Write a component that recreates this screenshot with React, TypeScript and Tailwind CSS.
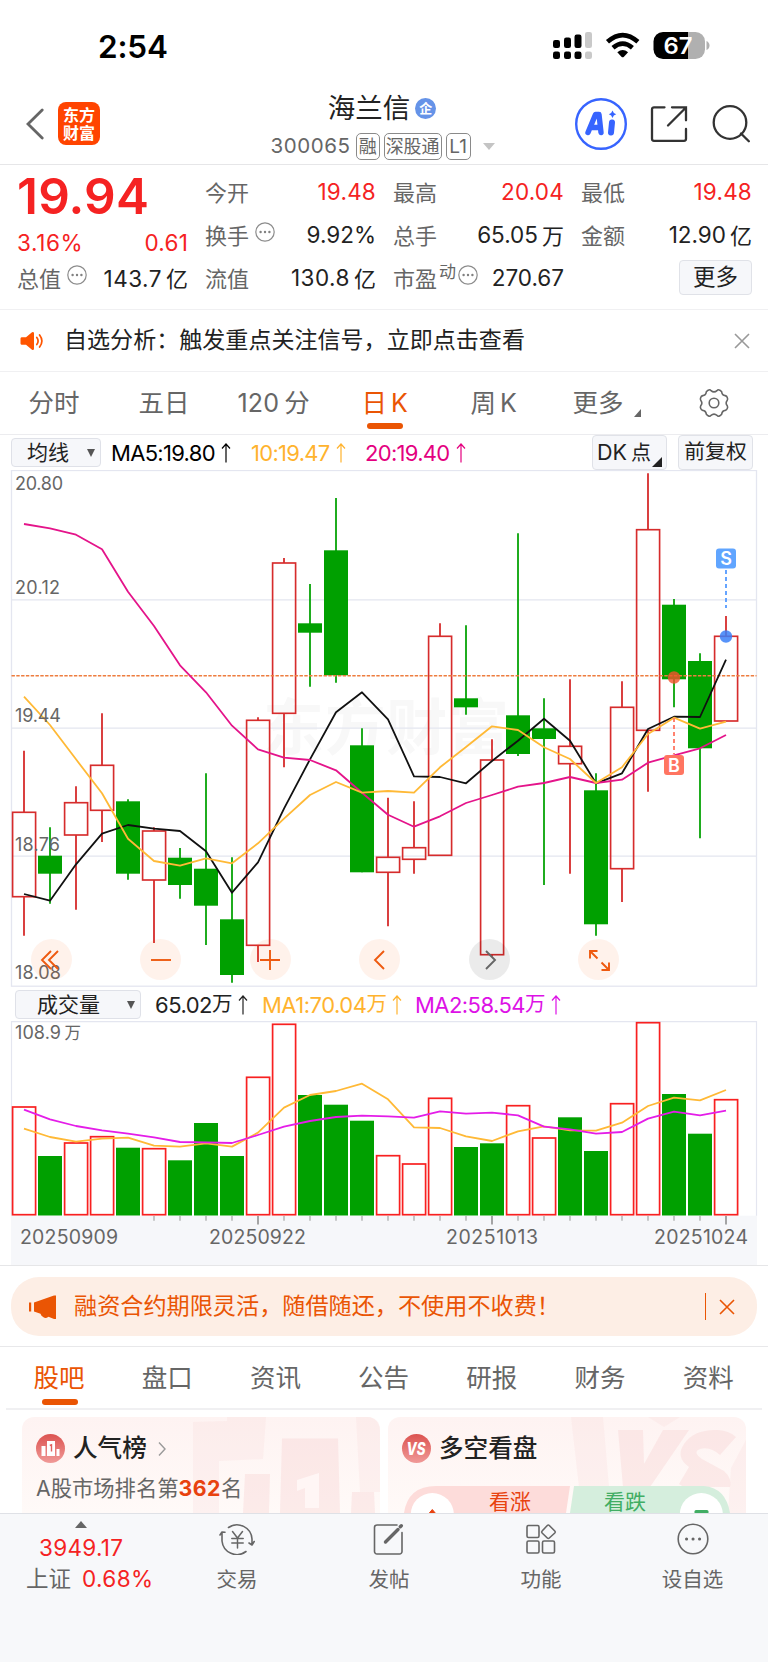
import React from "react";

const RED = "#d62c2c";
const GREEN = "#00a000";

type Candle = { up: boolean; high: number; top: number; bottom: number; low: number };

const c = (up: number, high: number, top: number, bottom: number, low: number): Candle => ({
  up: up === 1,
  high,
  top,
  bottom,
  low,
});

const candles: Candle[] = [
  c(1, 750.7, 812.3, 896.7, 935.7),
  c(0, 827.3, 855.7, 873.7, 903.7),
  c(1, 786.3, 802.7, 835, 909.7),
  c(1, 713.3, 765.3, 810.3, 842),
  c(0, 799.3, 801.3, 873.7, 879.7),
  c(1, 827.3, 831, 880, 943),
  c(0, 848, 857.7, 885, 898.7),
  c(0, 773.3, 868.7, 905.7, 945),
  c(0, 857.3, 919.3, 975, 982.7),
  c(1, 717.3, 720.3, 945.3, 962),
  c(1, 558, 563, 713.3, 767.3),
  c(0, 584, 623.3, 632.7, 686.7),
  c(0, 498, 550.3, 675.3, 682.7),
  c(0, 728.3, 745.3, 872.3, 872.3),
  c(1, 797.7, 857.3, 872.3, 926.3),
  c(1, 801.3, 847.7, 859.3, 873.7),
  c(1, 623.3, 636.3, 855.3, 855.3),
  c(0, 625.3, 698.3, 707.3, 714.7),
  c(1, 739.3, 760, 954.7, 956.5),
  c(0, 533.3, 715.3, 754, 756),
  c(0, 698.3, 728.3, 739, 885),
  c(1, 679.3, 746.3, 763.7, 873.7),
  c(0, 773.3, 790.3, 924.3, 935.7),
  c(1, 681.3, 707.3, 868.7, 902),
  c(1, 473.3, 529.7, 730.3, 791.7),
  c(0, 599, 604.7, 679.3, 707.3),
  c(0, 653.3, 661, 748.3, 838.3),
  c(1, 616, 636.3, 721, 721),
];

const ma5 = [894, 900.7, 864.3, 833.7, 825, 828.7, 831, 851.3, 892.7, 862.3, 808.7, 759.3, 712.3, 692.3, 719.3, 776.3, 777, 783.3, 761, 740.7, 718.7, 740.7, 783.3, 773.3, 729, 716.7, 717, 659.7];
const ma10 = [696.7, 725, 759.3, 793.3, 838.7, 861, 865.7, 858.3, 863.3, 843.3, 818.7, 795, 782, 792.7, 791, 792.7, 767.3, 747, 726.3, 730, 747.3, 759, 783, 767.3, 734, 717.7, 728.7, 721.7];
const ma20 = [524, 528.3, 534.7, 549.3, 591.7, 626, 665.3, 692.3, 725.7, 749.3, 757.7, 760, 770.3, 792.7, 814.7, 826.7, 816.3, 803, 795, 786.7, 783, 777, 783, 779.7, 762.7, 755.3, 748.3, 735];

const volumes = [1107, 1156, 1143, 1136.7, 1147.7, 1148.7, 1160.3, 1123, 1156, 1077.3, 1024.3, 1095, 1104.7, 1120.7, 1155.7, 1164, 1098.3, 1147, 1143.3, 1105.7, 1138, 1117.3, 1151, 1103.7, 1022.7, 1094, 1133.7, 1099.7];
const volumeUp = [1, 0, 1, 1, 0, 1, 0, 0, 0, 1, 1, 0, 0, 0, 1, 1, 1, 0, 0, 1, 1, 0, 0, 1, 1, 0, 0, 1];
const vma1 = [446, 471, 485, 476, 473, 497, 500, 490, 500, 458, 383, 345, 333, 311, 358, 442, 444, 469, 483, 454, 439, 451, 452, 428, 378, 353, 361, 330].map((v) => 980 + v / 3);
const vma2 = [389, 418, 438, 451, 461, 472, 486, 487, 489, 465, 440, 423, 411, 407, 409, 413, 394, 401, 398, 406, 440, 448, 461, 456, 416, 395, 406, 392].map((v) => 980 + v / 3);

const cx = (i: number) => 24 + 26 * i;
const points = (ys: number[]) => ys.map((y, i) => `${cx(i)},${y}`).join(" ");

function UpArrow({ className = "" }: { className?: string }) {
  return (
    <svg viewBox="0 0 10 20" className={`h-5 w-2.5 shrink-0 ${className}`} fill="none" stroke="currentColor" strokeWidth="1.2">
      <path d="M5 19.5V1M1 5.5L5 1l4 4.5" />
    </svg>
  );
}

function Dots() {
  return (
    <svg viewBox="0 0 20 20" className="h-5 w-5 shrink-0" fill="none" stroke="#8c8c8c" strokeWidth="1.2">
      <circle cx="10" cy="10" r="9.2" />
      <g fill="#808080" stroke="none">
        <circle cx="5.6" cy="10" r="1.2" />
        <circle cx="10" cy="10" r="1.2" />
        <circle cx="14.4" cy="10" r="1.2" />
      </g>
    </svg>
  );
}

function Cross({ className = "" }: { className?: string }) {
  return (
    <svg viewBox="0 0 16 16" className={`h-4 w-4 ${className}`} fill="none" stroke="currentColor" strokeWidth="1.6">
      <path d="M1 1l14 14M15 1L1 15" />
    </svg>
  );
}

function StatusBar() {
  return (
    <div className="flex h-[86px] items-start justify-between pr-[56px] pl-[98px]">
      <div className="mt-[31px] text-[31.5px] leading-none font-semibold tracking-[-0.2px] text-black">2:54</div>
      <svg viewBox="552 30 160 32" className="mt-[30px] h-8 w-40">
        <g fill="#000">
          <rect x="553" y="40" width="7" height="8" rx="2.2" />
          <rect x="564" y="37.5" width="7" height="10.5" rx="2.2" />
          <rect x="574.5" y="34.5" width="7" height="13.5" rx="2.2" />
          <rect x="553" y="51.5" width="7" height="7.5" rx="2.2" />
          <rect x="564" y="51.5" width="7" height="7.5" rx="2.2" />
          <rect x="574.5" y="51.5" width="7" height="7.5" rx="2.2" />
        </g>
        <g fill="#c9c9c9">
          <rect x="585" y="32" width="7" height="16" rx="2.2" />
          <rect x="585" y="51.5" width="7" height="7.5" rx="2.2" />
        </g>
        <g fill="none" stroke="#000" strokeWidth="4.6">
          <path d="M607.5 41.8Q622.7 28.4 637.9 41.8" />
          <path d="M613 47.8Q622.7 39.6 632.4 47.8" />
        </g>
        <path d="M617.3 52.3Q622.7 47.6 628.1 52.3L623.7 56.9Q622.7 57.8 621.7 56.9Z" fill="#000" />
        <path d="M663 32h25v27h-25a9.5 9.5 0 0 1-9.5-9.5v-8a9.5 9.5 0 0 1 9.5-9.5z" fill="#000" />
        <path d="M688 32h7.500a9.500 9.500 0 0 1 9.500 9.500v8a9.500 9.500 0 0 1-9.500 9.500H688z" fill="#b0b0b0" />
        <path d="M706.5 41q3 1.500 3 4.500t-3 4.500z" fill="#b0b0b0" />
        <text x="663.5" y="54" className="font-semibold" fontSize="23.5" fill="#fff" textLength="29" lengthAdjust="spacingAndGlyphs">
          67
        </text>
      </svg>
    </div>
  );
}

function Header() {
  return (
    <header className="relative flex h-[79px] items-start justify-between border-b border-[#e6e6e8] pr-[18px] pl-[26px]">
      <div className="flex items-center pt-[16px]">
        <svg viewBox="0 0 18 32" className="h-8 w-[18px]" fill="none" stroke="#666" strokeWidth="2.8" strokeLinecap="round">
          <path d="M16.2 2L2 16l14.200 14" />
        </svg>
        <div className="ml-[14px] flex h-[43px] w-[42px] flex-col items-center justify-center gap-[2px] rounded-[8px] bg-[#ff4400] text-[16px] leading-none font-bold text-white">
          <span>东方</span>
          <span>财富</span>
        </div>
      </div>
      <div className="ml-[90px] flex flex-col items-center">
        <div className="mt-[9px] -ml-[1px] flex h-[27px] items-center text-[27.5px] leading-none text-[#222]">
          海兰信
          <span className="ml-[5px] flex h-[21px] w-[21px] items-center justify-center rounded-full bg-[#6593e8] text-[13px] leading-none font-bold text-white">
            企
          </span>
        </div>
        <div className="mt-[11px] flex h-[27px] items-center leading-none text-[#666]">
          <span className="text-[20.5px] tracking-[0.6px]">300065</span>
          <span className="ml-[5px] flex h-[27px] w-[24px] items-center justify-center rounded-[5px] border border-[#8a8a8a] text-[18px]">融</span>
          <span className="ml-[4px] flex h-[27px] w-[58px] items-center justify-center rounded-[5px] border border-[#8a8a8a] text-[18px]">深股通</span>
          <span className="ml-[4px] flex h-[27px] w-[25px] items-center justify-center rounded-[5px] border border-[#8a8a8a] text-[19px]">L1</span>
          <svg viewBox="0 0 12 7" className="ml-[12px] h-[7px] w-3">
            <path d="M0 0h12L6 7z" fill="#c4c4c4" />
          </svg>
        </div>
      </div>
      <div className="flex items-center pt-[12px]">
        <svg viewBox="0 0 52 52" className="h-[52px] w-[52px]">
          <circle cx="26" cy="26" r="24.8" fill="none" stroke="#3764ff" strokeWidth="2.4" />
          <g fill="none" stroke="#3764ff" strokeLinejoin="round" strokeLinecap="round">
            <path d="M13 34.500L20.500 16.500H24L26 34.500M16.500 29.500H25" strokeWidth="5.4" />
            <path d="M37 24.500L36 34.500" strokeWidth="6" />
          </g>
          <path d="M37.5 12.500q.8 3 3.700 3.700q-2.900.8-3.700 3.700q-.8-2.900-3.700-3.700q2.900-.7 3.700-3.700z" fill="#3764ff" />
        </svg>
        <svg viewBox="0 0 38 38" className="ml-[23px] h-[38px] w-[38px]" fill="none" stroke="#333" strokeWidth="2.3" strokeLinecap="round">
          <path d="M14.5 2.300H4a2 2 0 0 0-2 2v29.500a2 2 0 0 0 2 2h30a2 2 0 0 0 2-2V24M22 2.300h14v13M18 20.500L36 2.500" />
        </svg>
        <svg viewBox="0 0 38 38" className="ml-[24px] h-[38px] w-[38px]" fill="none" stroke="#333" strokeWidth="2.3" strokeLinecap="round">
          <circle cx="18" cy="17.5" r="16.3" />
          <path d="M29 28.500l7.800 7.800" />
        </svg>
      </div>
    </header>
  );
}

function Cell({ label, value, extra, red }: { label: string; value: React.ReactNode; extra?: React.ReactNode; red?: boolean }) {
  return (
    <div className="flex h-[43px] items-center justify-between leading-none">
      <span className="flex items-center text-[22px] text-[#666]">
        {label}
        {extra}
      </span>
      <span className={red ? "text-[22.5px] tracking-[0.2px] text-[#f52222]" : "flex items-center text-[22.5px] text-[#222]"}>{value}</span>
    </div>
  );
}

function Unit({ n, u, wide }: { n: string; u: string; wide?: boolean }) {
  return (
    <>
      <span className={wide ? "tracking-[0.5px]" : ""}>{n}</span>
      <span className="ml-[4px] text-[22px]">{u}</span>
    </>
  );
}

function Quote() {
  return (
    <section className="grid h-[145px] grid-cols-4 gap-x-[17px] border-b border-[#f0f0f2] pt-[6px] pr-4 pl-[17px]">
      <div className="flex flex-col leading-none">
        <div className="flex h-[52px] items-center text-[49.5px] font-semibold tracking-[0.2px] text-[#f52222]">19.94</div>
        <div className="flex h-[41px] items-center justify-between text-[22.5px] text-[#f52222]">
          <span className="tracking-[0.6px]">3.16%</span>
          <span className="tracking-[0.2px]">0.61</span>
        </div>
        <div className="flex h-[30px] items-center justify-between">
          <span className="flex items-center text-[22px] text-[#666]">
            总值
            <span className="mb-2 ml-[6px]">
              <Dots />
            </span>
          </span>
          <span className="flex items-center text-[22.5px] text-[#222]">
            <Unit n="143.7" u="亿" wide />
          </span>
        </div>
      </div>
      <div>
        <Cell label="今开" value="19.48" red />
        <Cell
          label="换手"
          extra={
            <span className="mb-2 ml-[6px]">
              <Dots />
            </span>
          }
          value="9.92%"
        />
        <Cell label="流值" value={<Unit n="130.8" u="亿" wide />} />
      </div>
      <div>
        <Cell label="最高" value="20.04" red />
        <Cell label="总手" value={<Unit n="65.05" u="万" />} />
        <Cell
          label="市盈"
          extra={
            <span className="mb-2 ml-[2px] flex items-center">
              <span className="mb-1 text-[17px]">动</span>
              <span className="ml-[2px]">
                <Dots />
              </span>
            </span>
          }
          value="270.67"
        />
      </div>
      <div>
        <Cell label="最低" value="19.48" red />
        <Cell label="金额" value={<Unit n="12.90" u="亿" />} />
        <div className="flex justify-end pt-[3px]">
          <button className="h-[35px] w-[73px] rounded-[4px] border border-[#e0e2e8] bg-[#f6f7fa] text-[22.5px] leading-none text-[#222]">更多</button>
        </div>
      </div>
    </section>
  );
}

function NewsBar() {
  return (
    <section className="flex h-[62px] items-center border-b border-[#f0f0f2] pr-[18px] pl-[20px]">
      <svg viewBox="0 0 24 20" className="h-5 w-6">
        <path d="M1.5 6.200H6L12 1.200q1.800-.8 2 1v15.600q-.2 1.800-2 1L6 13.800H1.500q-1-.2-1-1.200V7.400q0-1 1-1.200z" fill="#ff5500" />
        <path d="M16.8 6.500q2.600 3.500 0 7M19.600 4q4.600 6 0 12" fill="none" stroke="#ff5500" strokeWidth="1.7" strokeLinecap="round" />
      </svg>
      <p className="ml-[20px] flex-1 text-[23.05px] leading-none text-[#222]">自选分析：触发重点关注信号，立即点击查看</p>
      <Cross className="text-[#999]" />
    </section>
  );
}

function PeriodTabs() {
  return (
    <nav className="flex h-[63px] items-center border-b border-[#ececef] pl-[28.5px] text-[25.5px] leading-none text-[#666]">
      <span className="w-[110px]">分时</span>
      <span className="w-[99px]">五日</span>
      <span className="flex w-[124px] items-center">
        <span className="text-[25px] tracking-[0.2px]">120</span>
        <span className="ml-[5px]">分</span>
      </span>
      <span className="relative flex w-[109px] items-center text-[#ea5504]">
        日<span className="ml-[4px] text-[25px]">K</span>
        <span className="absolute top-[33px] left-[5px] h-[6px] w-9 rounded-full bg-[#ea5504]" />
      </span>
      <span className="flex w-[102px] items-center">
        周<span className="ml-[4px] text-[25px]">K</span>
      </span>
      <span className="flex items-center">
        更多
        <svg viewBox="0 0 7 8" className="mt-[20px] ml-[10px] h-2 w-[7px]">
          <path d="M7 0v8H0z" fill="#666" />
        </svg>
      </span>
      <svg viewBox="0 0 30 30" className="ml-[58px] h-[30px] w-[30px]" fill="none" stroke="#666" strokeWidth="1.6" strokeLinejoin="round">
        <path d="M9.2 2.200Q11 1.200 12 2.600Q15 5.200 18 2.600Q19 1.200 20.800 2.200L22.600 3.600Q23.200 7.400 26.200 7.600Q27.800 8 28.200 9.400Q29 11 28.300 12.200Q26 15 28.300 17.800Q29 19 28.200 20.600Q27.800 22 26.200 22.400Q23.200 22.600 22.600 26.400L20.800 27.800Q19 28.800 18 27.400Q15 24.800 12 27.400Q11 28.800 9.200 27.800L7.400 26.400Q6.800 22.600 3.800 22.400Q2.200 22 1.800 20.600Q1 19 1.700 17.800Q4 15 1.700 12.200Q1 11 1.800 9.400Q2.200 8 3.800 7.600Q6.800 7.400 7.400 3.600Z" />
        <circle cx="15" cy="15" r="4.8" />
      </svg>
    </nav>
  );
}

function IndicatorRow() {
  return (
    <div className="flex h-[35px] items-center pr-[15px] pl-[11px] text-[22px] leading-none">
      <div className="flex h-[29px] w-[90px] items-center rounded-[4px] border border-[#dfe1e8] bg-[#f6f7fa] pl-[15px] text-[21px] text-[#222]">
        均线
        <svg viewBox="0 0 8 8" className="ml-[18px] h-2 w-2">
          <path d="M0 0h8L4 8z" fill="#555" />
        </svg>
      </div>
      <span className="ml-[10px] flex w-[140px] items-center tracking-[-0.7px] text-black">
        MA5:19.80
        <UpArrow className="ml-[6px]" />
      </span>
      <span className="flex w-[114px] items-center tracking-[-0.7px] text-[#ffb32e]">
        10:19.47
        <UpArrow className="ml-[6px]" />
      </span>
      <span className="flex items-center tracking-[-0.7px] text-[#e4007f]">
        20:19.40
        <UpArrow className="ml-[6px]" />
      </span>
      <div className="ml-auto flex">
        <div className="relative flex h-[35px] w-[75px] items-center rounded-[4px] border border-[#e0e2e8] bg-[#f6f7fa] pl-[4px] text-[21.5px] text-[#222]">
          DK<span className="ml-[4px] text-[20px]">点</span>
          <svg viewBox="0 0 10 10" className="absolute right-[4px] bottom-[2px] h-2.5 w-2.5">
            <path d="M10 0v10H0z" fill="#222" />
          </svg>
        </div>
        <div className="ml-[11px] flex h-[35px] w-[75px] items-center justify-center rounded-[4px] border border-[#e0e2e8] bg-[#f6f7fa] text-[20.8px] text-[#222]">前复权</div>
      </div>
    </div>
  );
}

const axis = [
  { t: "20.80", y: 490.3, w: 48 },
  { t: "20.12", y: 593.5, w: 45 },
  { t: "19.44", y: 722.3, w: 46 },
  { t: "18.76", y: 851.3, w: 45 },
  { t: "18.08", y: 979.3, w: 46 },
];

const controls = [
  { d: "M10 1L1 10l9 9M17 1L8 10l9 9", active: true },
  { d: "M0 10h20", active: true },
  { d: "M0 10h20M10 0v20", active: true },
  { d: "M14 1L5 10l9 9", active: true },
  { d: "M7 1l9 9-9 9", active: false },
  { d: "M1 8.500V1h7.500M1 1l7.500 7.500M20 12.500V20h-7.500M20 20l-7.500-7.500", active: true },
];

function PriceChart() {
  return (
    <div className="relative h-[518px]">
      <svg viewBox="0 470 768 518" className="block h-[518px] w-[768px]">
        <text x="263" y="750" fontSize="61" fontWeight="700" fill="#f8f8f8" textLength="246">
          东方财富
        </text>
        <g stroke="#e4e6f0" strokeWidth="1.3" fill="none">
          <path d="M11.5 599.900H756.500M11.500 728.200H756.500M11.500 856.200H756.500" />
          <rect x="11.5" y="470.5" width="745" height="515.7" />
        </g>
        {candles.map((k, i) =>
          k.up ? (
            <g key={i} stroke={RED} strokeWidth="1.65" fill="none">
              <path d={`M${cx(i)} ${k.high}V${k.top}M${cx(i)} ${k.bottom}V${k.low}`} strokeWidth="1.8" />
              <rect x={cx(i) - 11.4} y={k.top} width="23" height={k.bottom - k.top} />
            </g>
          ) : (
            <g key={i} fill={GREEN}>
              <path d={`M${cx(i)} ${k.high}V${k.low}`} stroke="#14a814" strokeWidth="1.9" />
              <rect x={cx(i) - 12} y={k.top} width="24" height={k.bottom - k.top} />
            </g>
          ),
        )}
        <path d="M11.5 675.700H756.500" stroke="#ee7d3f" strokeWidth="1.6" strokeDasharray="3.400 1.400" />
        <g fill="none" strokeWidth="1.8" strokeLinejoin="round">
          <polyline points={points(ma5)} stroke="#111" />
          <polyline points={points(ma20)} stroke="#e4148a" />
          <polyline points={points(ma10)} stroke="#ffb936" />
        </g>
        <g fill="#666" fontSize="18">
          {axis.map((a) => (
            <text key={a.t} x="15" y={a.y} textLength={a.w}>
              {a.t}
            </text>
          ))}
        </g>
        <path d="M726 570V608" stroke="#559bff" strokeWidth="1.8" strokeDasharray="4 3" />
        <rect x="716" y="548.5" width="20" height="20" rx="3" fill="#60a5ff" />
        <text x="726" y="565" fontSize="18" textAnchor="middle" fill="#fff" className="font-semibold">
          S
        </text>
        <circle cx="726" cy="636.5" r="6.2" fill="#3a80f8" fillOpacity="0.85" />
        <path d="M674 718V754" stroke="#ff7561" strokeWidth="1.8" strokeDasharray="4 3" />
        <rect x="664" y="755" width="20" height="20" rx="3" fill="#ff7561" />
        <text x="674" y="771.5" fontSize="18" textAnchor="middle" fill="#fff" className="font-semibold">
          B
        </text>
        <circle cx="674" cy="677.5" r="6.2" fill="#f5532d" fillOpacity="0.8" />
      </svg>
      <div className="absolute bottom-[8px] left-[30.5px] flex gap-[68.5px]">
        {controls.map((k, i) => (
          <button
            key={i}
            className={`flex h-[41px] w-[41px] items-center justify-center rounded-full ${k.active ? "bg-[#ff5500]/8 text-[#ee5a10]" : "bg-black/8 text-[#666]"}`}
          >
            <svg viewBox="0 0 20 20" className="h-5 w-5 overflow-visible" fill="none" stroke="currentColor" strokeWidth="1.9">
              <path d={k.d} />
            </svg>
          </button>
        ))}
      </div>
    </div>
  );
}

function VolumeRow() {
  return (
    <div className="flex h-[33px] items-center pl-[15px] text-[22px] leading-none">
      <div className="flex h-[29px] w-[126px] items-center rounded-[4px] border border-[#dfe1e8] bg-[#f6f7fa] pl-[21px] text-[21px] text-[#222]">
        成交量
        <svg viewBox="0 0 8 8" className="ml-[27px] h-2 w-2">
          <path d="M0 0h8L4 8z" fill="#555" />
        </svg>
      </div>
      <span className="ml-[14px] flex w-[107px] items-center tracking-[-0.5px] text-[#222]">
        65.02<span className="text-[20.5px]">万</span>
        <UpArrow className="ml-[6px]" />
      </span>
      <span className="flex w-[153px] items-center tracking-[-0.5px] text-[#ffb32e]">
        MA1:70.04<span className="text-[20.5px]">万</span>
        <UpArrow className="ml-[6px]" />
      </span>
      <span className="flex items-center tracking-[-0.55px] text-[#dd11e6]">
        MA2:58.54<span className="text-[20.5px]">万</span>
        <UpArrow className="ml-[6px]" />
      </span>
    </div>
  );
}

const dates = [
  { t: "20250909", x: 20, w: 98 },
  { t: "20250922", x: 209, w: 97 },
  { t: "20251013", x: 446, w: 92 },
  { t: "20251024", x: 654, w: 94 },
];

function VolumeChart() {
  return (
    <div className="border-b border-[#e6e6e8]">
      <svg viewBox="0 1021 768 244" className="block h-[244px] w-[768px]">
        <rect x="11" y="1215.7" width="746" height="49.3" fill="#f6f7fa" />
        <path d="M11.5 1215.700V1021.600H756.500V1215.700" fill="none" stroke="#e4e6f0" strokeWidth="1.2" />
        {volumes.map((y, i) =>
          volumeUp[i] ? (
            <rect key={i} x={cx(i) - 11.4} y={y} width="23" height={1214.7 - y} fill="none" stroke="#f82020" strokeWidth="1.7" />
          ) : (
            <rect key={i} x={cx(i) - 12} y={y} width="24" height={1215.5 - y} fill={GREEN} />
          ),
        )}
        {volumes.map((_, i) =>
          i < 5 ? null : <path key={i} d={`M${cx(i)} 1216v${i % 9 === 0 ? 8.5 : 4.8}`} stroke={i % 9 === 0 ? "#888" : "#b5b5b5"} strokeWidth="1.5" />,
        )}
        <g fill="none" strokeWidth="1.8" strokeLinejoin="round">
          <polyline points={points(vma1)} stroke="#ffb936" />
          <polyline points={points(vma2)} stroke="#e41de8" />
        </g>
        <g fill="#666">
          <text x="15" y="1039.3" fontSize="18" textLength="46">
            108.9
          </text>
          <text x="64.5" y="1039" fontSize="16.5">
            万
          </text>
          {dates.map((d) => (
            <text key={d.t} x={d.x} y="1244" fontSize="19.5" textLength={d.w}>
              {d.t}
            </text>
          ))}
        </g>
      </svg>
    </div>
  );
}

function Banner() {
  return (
    <section className="h-[81px] border-b border-[#e8e8ea] px-[11px] pt-[11px]">
      <div className="flex h-[59px] items-center rounded-[28px] bg-[#fdeee5] pr-[22px] pl-[18px] text-[#ea5504]">
        <svg viewBox="0 0 27 24" className="h-6 w-[27px]" fill="#ea5504">
          <rect x="0" y="7.5" width="2.2" height="9" />
          <path d="M5 7.500L25 0.500h2V24h-2l-5.500-2.200q-3 2.200-5 .5l-2-1.500-1-2L5 16.500z" />
        </svg>
        <p className="ml-[18px] flex-1 text-[23.15px] leading-none">融资合约期限灵活，随借随还，不使用不收费！</p>
        <span className="h-[27px] w-[1.5px] bg-[#ea5504]" />
        <Cross className="ml-[13px]" />
      </div>
    </section>
  );
}

function InfoTabs() {
  return (
    <nav className="mx-[6px] flex h-[63px] items-center border-b-2 border-[#f0f0f2] pl-[27.5px] text-[25.5px] leading-none text-[#666]">
      {["股吧", "盘口", "资讯", "公告", "研报", "财务", "资料"].map((t, i) => (
        <span key={t} className={`relative w-[108.2px] shrink-0 ${i === 0 ? "text-[#ea5504]" : ""}`}>
          {t}
          {i === 0 && <span className="absolute top-[34px] left-[8px] h-[6px] w-9 rounded-full bg-[#ea5504]" />}
        </span>
      ))}
    </nav>
  );
}

function Cards() {
  return (
    <section className="flex h-[103px] gap-2 overflow-hidden pt-[7px] pl-[22px]">
      <div className="relative h-24 w-[358px] rounded-t-[12px] bg-gradient-to-b from-[#fef3f2] to-[#fffaf8]">
        <svg viewBox="22 1417 358 96" className="absolute inset-0 h-24 w-[358px]">
          <g fill="#f9dcdc" fillOpacity="0.28">
            <path d="M193 1422l34-1V1417h39l-3 42-44 2v52h-26z" />
            <path d="M356 1417h14q10 3 10 15v60h-20z" />
          </g>
          <g fill="#f8cfcf" fillOpacity="0.36">
            <path d="M282 1438.500h56l2 74.500h-60z" />
            <path d="M245 1474h25l-1 39h-26z" />
            <path d="M352 1492h22l1 21h-24z" />
          </g>
          <path d="M297 1480l22-7v35h-14v-20l-8 3z" fill="#fff6f5" />
          <circle cx="50.5" cy="1448.5" r="14.5" fill="url(#badge)" />
          <path d="M41.5 1446h4v10h-4zM47 1441h8v15h-8zM56.500 1449h3v7h-3z" fill="#fff" />
          <path d="M49.8 1445.500l1.700-.7v6.700" stroke="#e0605d" strokeWidth="1.4" fill="none" />
          <defs>
            <linearGradient id="badge" x1="0" y1="0" x2="0" y2="1">
              <stop offset="0" stopColor="#dc5350" />
              <stop offset="1" stopColor="#f09a98" />
            </linearGradient>
          </defs>
        </svg>
        <div className="relative flex h-[63px] items-center pl-[51px] text-[24.6px] leading-none font-medium text-[#222]">
          人气榜
          <svg viewBox="0 0 8 14" className="ml-[11px] h-3.5 w-2" fill="none" stroke="#999" strokeWidth="1.4">
            <path d="M1 0.500l6 6.500-6 6.500" />
          </svg>
        </div>
        <div className="relative mt-[-3px] pl-[14px] text-[21.3px] leading-[22px] whitespace-nowrap text-[#666]">
          A股市场排名第<b className="font-bold tracking-[0.5px] text-[#e8420f]">362</b>名
        </div>
      </div>
      <div className="relative h-24 w-[358px] overflow-hidden rounded-t-[12px] bg-gradient-to-b from-[#fef3f2] to-[#fffaf8]">
        <svg viewBox="388 1417 358 96" className="absolute inset-0 h-24 w-[358px]">
          <g fill="#f9dcdc" fillOpacity="0.28">
            <path d="M571 1417h32l6 70h-30z" />
            <path d="M648 1417h32l-16 10z" />
            <path d="M746 1440v73h-18l3-45z" />
          </g>
          <g fill="#f8cfcf" fillOpacity="0.36">
            <path d="M618 1430h25l1 34 19-34h26l-39 57h-27z" />
            <path d="M736 1437l-16 18q-10-9-20-6-8 3 2 10l22 12q8 7 6 16h-46l-5-3 10-17q-14-10-5-23 10-15 34-14 12 1 18 7z" />
          </g>
          <circle cx="416.5" cy="1448.5" r="14.5" fill="url(#badge)" />
          <text x="406.5" y="1455" fontSize="17" fontStyle="italic" fontWeight="800" fill="#fff" textLength="19" lengthAdjust="spacingAndGlyphs">
            VS
          </text>
          <path d="M404 1513q4-27 32-27H570l-4 27z" fill="#fddcda" />
          <path d="M574 1486H704q22 2 26 27H570z" fill="#d5eedd" />
          <circle cx="432.3" cy="1514.5" r="21.5" fill="#fff" />
          <circle cx="701.3" cy="1514.5" r="21.5" fill="#fff" />
          <path d="M428.5 1514l3.800-4.500 3.800 4.500z" fill="#e8420f" stroke="#e8420f" strokeLinejoin="round" />
          <rect x="694.5" y="1510" width="14" height="6" rx="1.5" fill="#41ad63" />
        </svg>
        <div className="relative flex h-[63px] items-center pl-[51px] text-[24.6px] leading-none font-medium text-[#222]">多空看盘</div>
        <div className="relative mt-[11px] flex pl-[101px] text-[21px] leading-[21px]">
          <span className="w-[115px] text-[#e8420f]">看涨</span>
          <span className="text-[#41ad63]">看跌</span>
        </div>
      </div>
    </section>
  );
}

function BottomItem({ label, children, className = "" }: { label: string; children: React.ReactNode; className?: string }) {
  return (
    <div className={`flex shrink-0 flex-col items-center text-[#666] ${className}`}>
      <svg viewBox="0 0 36 32" className="mt-[9px] h-8 w-9" fill="none" stroke="#666" strokeWidth="1.6" strokeLinecap="round" strokeLinejoin="round">
        {children}
      </svg>
      <span className="mt-[14px] text-[20.5px] leading-[22px]">{label}</span>
    </div>
  );
}

function BottomBar() {
  return (
    <footer className="flex h-[149px] items-start border-t border-[#dfe1e6] bg-[#f7f8fa] pl-[26px]">
      <div className="flex w-[135px] shrink-0 flex-col leading-none">
        <svg viewBox="0 0 12 7" className="mt-[7px] ml-[49px] h-[7px] w-3">
          <path d="M0 7h12L6 0z" fill="#666" />
        </svg>
        <span className="mt-[9px] ml-[13px] text-[22.5px] tracking-[0.3px] text-[#f52222]">3949.17</span>
        <span className="mt-[8px] flex items-center text-[22.5px] text-[#666]">
          上证<span className="ml-[11px] tracking-[0.4px] text-[#f52222]">0.68%</span>
        </span>
      </div>
      <BottomItem label="交易" className="w-[152px]">
        <path d="M9.5 4.500A15 15 0 0 1 33 16v5.500M33 22l-3-2M33 22l2.200-3.500M27 28.500A15 15 0 0 1 3 18V9.500M1 12l2-3 3 .2" />
        <path d="M13.5 8.500l5 6.500 5-6.500M12.800 15.500h11.400M12.800 20h11.400M18.500 15v10" strokeWidth="1.5" />
      </BottomItem>
      <BottomItem label="发帖" className="w-[152px]">
        <path d="M26 2H6a2.500 2.500 0 0 0-2.500 2.500v24A2.500 2.500 0 0 0 6 31h22.500a2.500 2.500 0 0 0 2.500-2.500V9.500" />
        <path d="M14.5 19L27 6.500" strokeWidth="3.4" />
        <path d="M29.3 3.800l1-1" strokeWidth="3.4" />
      </BottomItem>
      <BottomItem label="功能" className="w-[152px]">
        <rect x="4" y="2.5" width="12" height="12" rx="1.5" />
        <rect x="4" y="18" width="12" height="12" rx="1.5" />
        <rect x="19.5" y="18" width="12" height="12" rx="1.5" />
        <path d="M24.3 2.500q1-1 2 0l5.500 5.500q1 1 0 2l-5.500 5q-1 1-2 0l-5.200-5q-1-1 0-2z" />
      </BottomItem>
      <BottomItem label="设自选" className="w-[151px]">
        <circle cx="18" cy="16" r="14.8" />
        <path d="M11.5 16h.1M18 16h.1M24.500 16h.1" strokeWidth="3" />
      </BottomItem>
    </footer>
  );
}

export default function App() {
  return (
    <div className="h-[1662px] w-[768px] overflow-hidden bg-white font-['Inter','Noto_Sans_CJK_SC',sans-serif]">
      <StatusBar />
      <Header />
      <Quote />
      <NewsBar />
      <PeriodTabs />
      <IndicatorRow />
      <PriceChart />
      <VolumeRow />
      <VolumeChart />
      <Banner />
      <InfoTabs />
      <Cards />
      <BottomBar />
    </div>
  );
}
